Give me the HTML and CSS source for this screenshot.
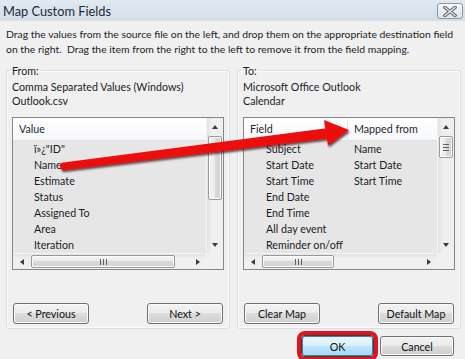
FILE: index.html
```html
<!DOCTYPE html>
<html>
<head>
<meta charset="utf-8">
<title>Map Custom Fields</title>
<link rel="stylesheet" href="styles.css">
</head>
<body>
<div class="window">
  <div class="titlebar">
    <span class="title">Map Custom Fields</span>
    <span class="close">
      <svg width="14" height="11" viewBox="0 0 14 11">
        <path d="M2 1.5 L12 9.5 M12 1.5 L2 9.5" stroke="#5d636b" stroke-width="3.4" stroke-linecap="square" fill="none"/>
        <path d="M2 1.5 L12 9.5 M12 1.5 L2 9.5" stroke="#e9ecef" stroke-width="1.3" stroke-linecap="square" fill="none"/>
      </svg>
    </span>
  </div>
  <div class="content">
    <p class="intro"><span class="line">Drag the values from the source file on the left, and drop them on the appropriate destination field</span><span class="line">on the right.&nbsp; Drag the item from the right to the left to remove it from the field mapping.</span></p>
    <div class="groups">
      <fieldset class="group">
        <legend>From:</legend>
        <div class="src first">Comma Separated Values (Windows)</div>
        <div class="src">Outlook.csv</div>
        <div class="list">
          <div class="list-top">
            <div class="list-body">
              <div class="header"><div class="hcol hcol-full">Value</div></div>
              <div class="rows">
                <div class="row"><span class="c1">ï»¿"ID"</span></div>
                <div class="row"><span class="c1">Name</span></div>
                <div class="row"><span class="c1">Estimate</span></div>
                <div class="row"><span class="c1">Status</span></div>
                <div class="row"><span class="c1">Assigned To</span></div>
                <div class="row"><span class="c1">Area</span></div>
                <div class="row"><span class="c1">Iteration</span></div>
              </div>
            </div>
            <div class="vscroll">
              <div class="sbtn"><span class="tri up"></span></div>
              <div class="vtrack"><div class="vthumb long"><span class="vgrip"></span></div></div>
              <div class="sbtn"><span class="tri down"></span></div>
            </div>
          </div>
          <div class="hbar">
            <div class="hscroll">
              <div class="sbtn h"><span class="tri left"></span></div>
              <div class="htrack"><div class="hthumb left-thumb"><span class="hgrip"></span></div></div>
              <div class="sbtn h"><span class="tri right"></span></div>
            </div>
            <div class="corner"></div>
          </div>
        </div>
        <div class="btn-row">
          <button class="btn">&lt; Previous</button>
          <button class="btn">Next &gt;</button>
        </div>
      </fieldset>
      <fieldset class="group">
        <legend>To:</legend>
        <div class="src first">Microsoft Office Outlook</div>
        <div class="src">Calendar</div>
        <div class="list">
          <div class="list-top">
            <div class="list-body">
              <div class="header"><div class="hcol hcol1">Field</div><div class="hcol hcol2">Mapped from</div></div>
              <div class="rows">
                <div class="row"><span class="c1 w">Subject</span><span class="c2">Name</span></div>
                <div class="row"><span class="c1 w">Start Date</span><span class="c2">Start Date</span></div>
                <div class="row"><span class="c1 w">Start Time</span><span class="c2">Start Time</span></div>
                <div class="row"><span class="c1 w">End Date</span></div>
                <div class="row"><span class="c1 w">End Time</span></div>
                <div class="row"><span class="c1 w">All day event</span></div>
                <div class="row"><span class="c1 w">Reminder on/off</span></div>
              </div>
            </div>
            <div class="vscroll">
              <div class="sbtn"><span class="tri up"></span></div>
              <div class="vtrack"><div class="vthumb short"><span class="vgrip"></span></div></div>
              <div class="sbtn"><span class="tri down"></span></div>
            </div>
          </div>
          <div class="hbar">
            <div class="hscroll">
              <div class="sbtn h"><span class="tri left"></span></div>
              <div class="htrack"><div class="hthumb right-thumb"><span class="hgrip"></span></div></div>
              <div class="sbtn h"><span class="tri right"></span></div>
            </div>
            <div class="corner"></div>
          </div>
        </div>
        <div class="btn-row">
          <button class="btn">Clear Map</button>
          <button class="btn">Default Map</button>
        </div>
      </fieldset>
    </div>
    <div class="footer">
      <button class="btn ok">OK</button>
      <button class="btn cancel">Cancel</button>
    </div>
  </div>
  <svg class="arrow" width="465" height="359" viewBox="0 0 465 359">
    <defs>
      <filter id="sh" x="-10%" y="-50%" width="120%" height="200%">
        <feDropShadow dx="1" dy="2" stdDeviation="1.2" flood-color="#2a0000" flood-opacity="0.7"/>
      </filter>
    </defs>
    <g filter="url(#sh)">
      <path d="M61.5 162.8 L326.6 128.2 L328 138.6 L62.4 170.3 Q58.2 167 61.5 162.8 Z" fill="#ec0f0f"/>
      <path d="M324 120 L349 130 L328 145.5 Z" fill="#ec0f0f"/>
    </g>
  </svg>
</div>
</body>
</html>
```
FILE: styles.css
```css
* { box-sizing: border-box; }
html, body { margin: 0; padding: 0; }
body {
  width: 465px;
  height: 359px;
  overflow: hidden;
  background: #f0f0f0;
  font-family: Lato, "Liberation Sans", Arial, sans-serif;
  font-size: 10.7px;
  color: #1c1c24;
}
.window { position: relative; height: 359px; }

.titlebar {
  height: 21px;
  display: flex;
  align-items: center;
  justify-content: space-between;
  padding: 0 2px 0 3px;
  background: linear-gradient(#e1e9f2, #d3dee9);
}
.title { font-size: 12.8px; color: #1f2a38; }
.close {
  width: 26px;
  height: 16px;
  margin-top: 1px;
  border: 1px solid #8d97a3;
  border-radius: 3px;
  background: linear-gradient(#f6f7f9, #dfe3e8);
  display: flex;
  align-items: center;
  justify-content: center;
}

.content { padding: 6px 4px 0 6px; }
.intro { margin: 0; line-height: 15px; font-size: 10.4px; }
.line { display: block; white-space: nowrap; }

.groups { display: flex; gap: 7px; margin-top: 6px; }
.group {
  margin: 0;
  width: 224px;
  min-width: 0;
  padding: 0 5px 4px 5px;
  border: 1px solid #d5dfe5;
  border-radius: 3px;
  box-shadow: inset 0 0 0 1px #fbfbfb;
}
.group legend { padding: 0 2px 0 0; line-height: 15px; }
.src { line-height: 14px; white-space: nowrap; }
.src.first { margin-top: 2px; }

.list {
  margin-top: 9px;
  height: 153px;
  border: 1px solid #828790;
  display: flex;
  flex-direction: column;
  background: #e6e6e6;
}
.list-top { display: flex; flex: 1; min-height: 0; }
.list-body { flex: 1; min-width: 0; }
.header {
  height: 23px;
  display: flex;
  background: linear-gradient(#ffffff, #f6f7f9);
  border-bottom: 1px solid #dde1e6;
}
.hcol { line-height: 22px; padding-left: 6px; color: #1e2633; }
.hcol-full { flex: 1; }
.hcol1 { width: 104px; border-right: 1px solid #e3e6ea; }
.hcol2 { flex: 1; }
.row { height: 16px; line-height: 16px; display: flex; white-space: nowrap; }
.c1 { padding-left: 21px; }
.c1.w { width: 110px; padding-left: 22px; }

.vscroll {
  width: 17px;
  display: flex;
  flex-direction: column;
  background: linear-gradient(to right, #e2e2e2, #efefef 30%, #efefef);
  border-left: 1px solid #f3f3f3;
}
.sbtn { height: 17px; display: flex; align-items: center; justify-content: center; flex: none; }
.sbtn.h { width: 17px; height: 16px; }
.vtrack { flex: 1; padding: 1px 1px; }
.vthumb {
  height: 64px;
  border: 1px solid #9a9a9a;
  border-radius: 2px;
  background: linear-gradient(to right, #f6f6f6, #e9e9e9 50%, #d9d9d9 50%, #d3d3d3);
  box-shadow: inset 0 0 0 1px #fbfbfb;
  display: flex;
  align-items: center;
  justify-content: center;
}
.vthumb.short { height: 22px; }
.vgrip {
  width: 6px;
  height: 7px;
  background: linear-gradient(#5e5e5e 0 1px, transparent 1px 3px, #5e5e5e 3px 4px, transparent 4px 6px, #5e5e5e 6px 7px);
}
.vthumb.long .vgrip { display: none; }

.tri { width: 0; height: 0; border-style: solid; }
.tri.up { border-width: 0 3.5px 4px 3.5px; border-color: transparent transparent #3c3c3c transparent; }
.tri.down { border-width: 4px 3.5px 0 3.5px; border-color: #3c3c3c transparent transparent transparent; }
.tri.left { border-width: 3.5px 4px 3.5px 0; border-color: transparent #3c3c3c transparent transparent; }
.tri.right { border-width: 3.5px 0 3.5px 4px; border-color: transparent transparent transparent #3c3c3c; }

.hbar { height: 16px; display: flex; flex: none; }
.hscroll {
  flex: 1;
  display: flex;
  background: linear-gradient(#e2e2e2, #efefef 30%, #efefef);
  border-top: 1px solid #f3f3f3;
}
.htrack { flex: 1; padding: 1px; }
.hthumb {
  height: 100%;
  border: 1px solid #9a9a9a;
  border-radius: 2px;
  background: linear-gradient(#f6f6f6, #e9e9e9 50%, #d9d9d9 50%, #d3d3d3);
  box-shadow: inset 0 0 0 1px #fbfbfb;
  display: flex;
  align-items: center;
  justify-content: center;
}
.hthumb.left-thumb { width: 144px; }
.hthumb.right-thumb { width: 72px; }
.hgrip {
  width: 7px;
  height: 6px;
  background: linear-gradient(to right, #5e5e5e 0 1px, transparent 1px 3px, #5e5e5e 3px 4px, transparent 4px 6px, #5e5e5e 6px 7px);
}
.corner { width: 17px; background: #f0f0f0; }

.btn-row { display: flex; justify-content: space-between; margin-top: 33px; padding: 0 1px; }
.btn {
  width: 76px;
  height: 21px;
  padding: 0;
  border: 1px solid #707070;
  border-radius: 3px;
  background: linear-gradient(#f2f2f2, #ebebeb 50%, #dddddd 50%, #cfcfcf);
  box-shadow: inset 0 0 0 1px #fbfbfb;
  font-family: inherit;
  font-size: 10.7px;
  color: #111;
}

.footer { display: flex; justify-content: flex-end; gap: 7px; margin-top: 7px; padding-right: 7px; }
.footer .btn { height: 20px; }
.ok {
  width: 71px;
  border-color: #3c7fb1;
  background: linear-gradient(#eaf6fd, #d9f0fc 50%, #bee6fd 50%, #a7d9f5);
  box-shadow: 0 0 0 1px #3b3b3b;
  outline: 4px solid #e3131b;
  outline-offset: 1px;
}
.cancel { width: 74px; }

.arrow { position: absolute; left: 0; top: 0; pointer-events: none; }
```
